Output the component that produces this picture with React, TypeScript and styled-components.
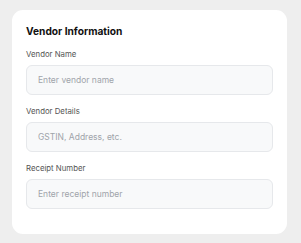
import styled, { createGlobalStyle } from "styled-components";

const GlobalStyle = createGlobalStyle`
  body {
    margin: 0;
    background: #eeeeee;
    font-family: Inter, "Noto Sans", sans-serif;
  }
`

const Page = styled.div`
  padding: 10px 14px 9px 12px;
`

const Card = styled.section`
  background: #ffffff;
  border-radius: 11px;
  padding: 14px 14px 25px;
  display: flex;
  flex-direction: column;
  gap: 10px;

  h2 {
    margin: 0;
    font-size: 10.2px;
    line-height: 14px;
    font-weight: 700;
    color: #111111;
  }
`

const Field = styled.div`
  display: flex;
  flex-direction: column;
  gap: 5px;

  label {
    font-size: 7.8px;
    line-height: 12px;
    color: #555555;
  }
`

const Input = styled.input`
  box-sizing: border-box;
  height: 30px;
  width: 100%;
  padding: 0 11px;
  border: 1px solid #e6e8eb;
  border-radius: 6px;
  background: #f8f9fa;
  font-family: inherit;
  font-size: 8.5px;
  color: #333;
  outline: none;

  &::placeholder {
    color: #a0a4aa;
  }
`

const fields = [
  { id: "vendor-name", label: "Vendor Name", placeholder: "Enter vendor name" },
  { id: "vendor-details", label: "Vendor Details", placeholder: "GSTIN, Address, etc." },
  { id: "receipt-number", label: "Receipt Number", placeholder: "Enter receipt number" },
]

function App() {
  return (
    <Page>
      <GlobalStyle />
      <Card>
        <h2>Vendor Information</h2>
        {fields.map((f) => (
          <Field key={f.id}>
            <label htmlFor={f.id}>{f.label}</label>
            <Input id={f.id} type="text" placeholder={f.placeholder} />
          </Field>
        ))}
      </Card>
    </Page>
  );
}

export default App;
